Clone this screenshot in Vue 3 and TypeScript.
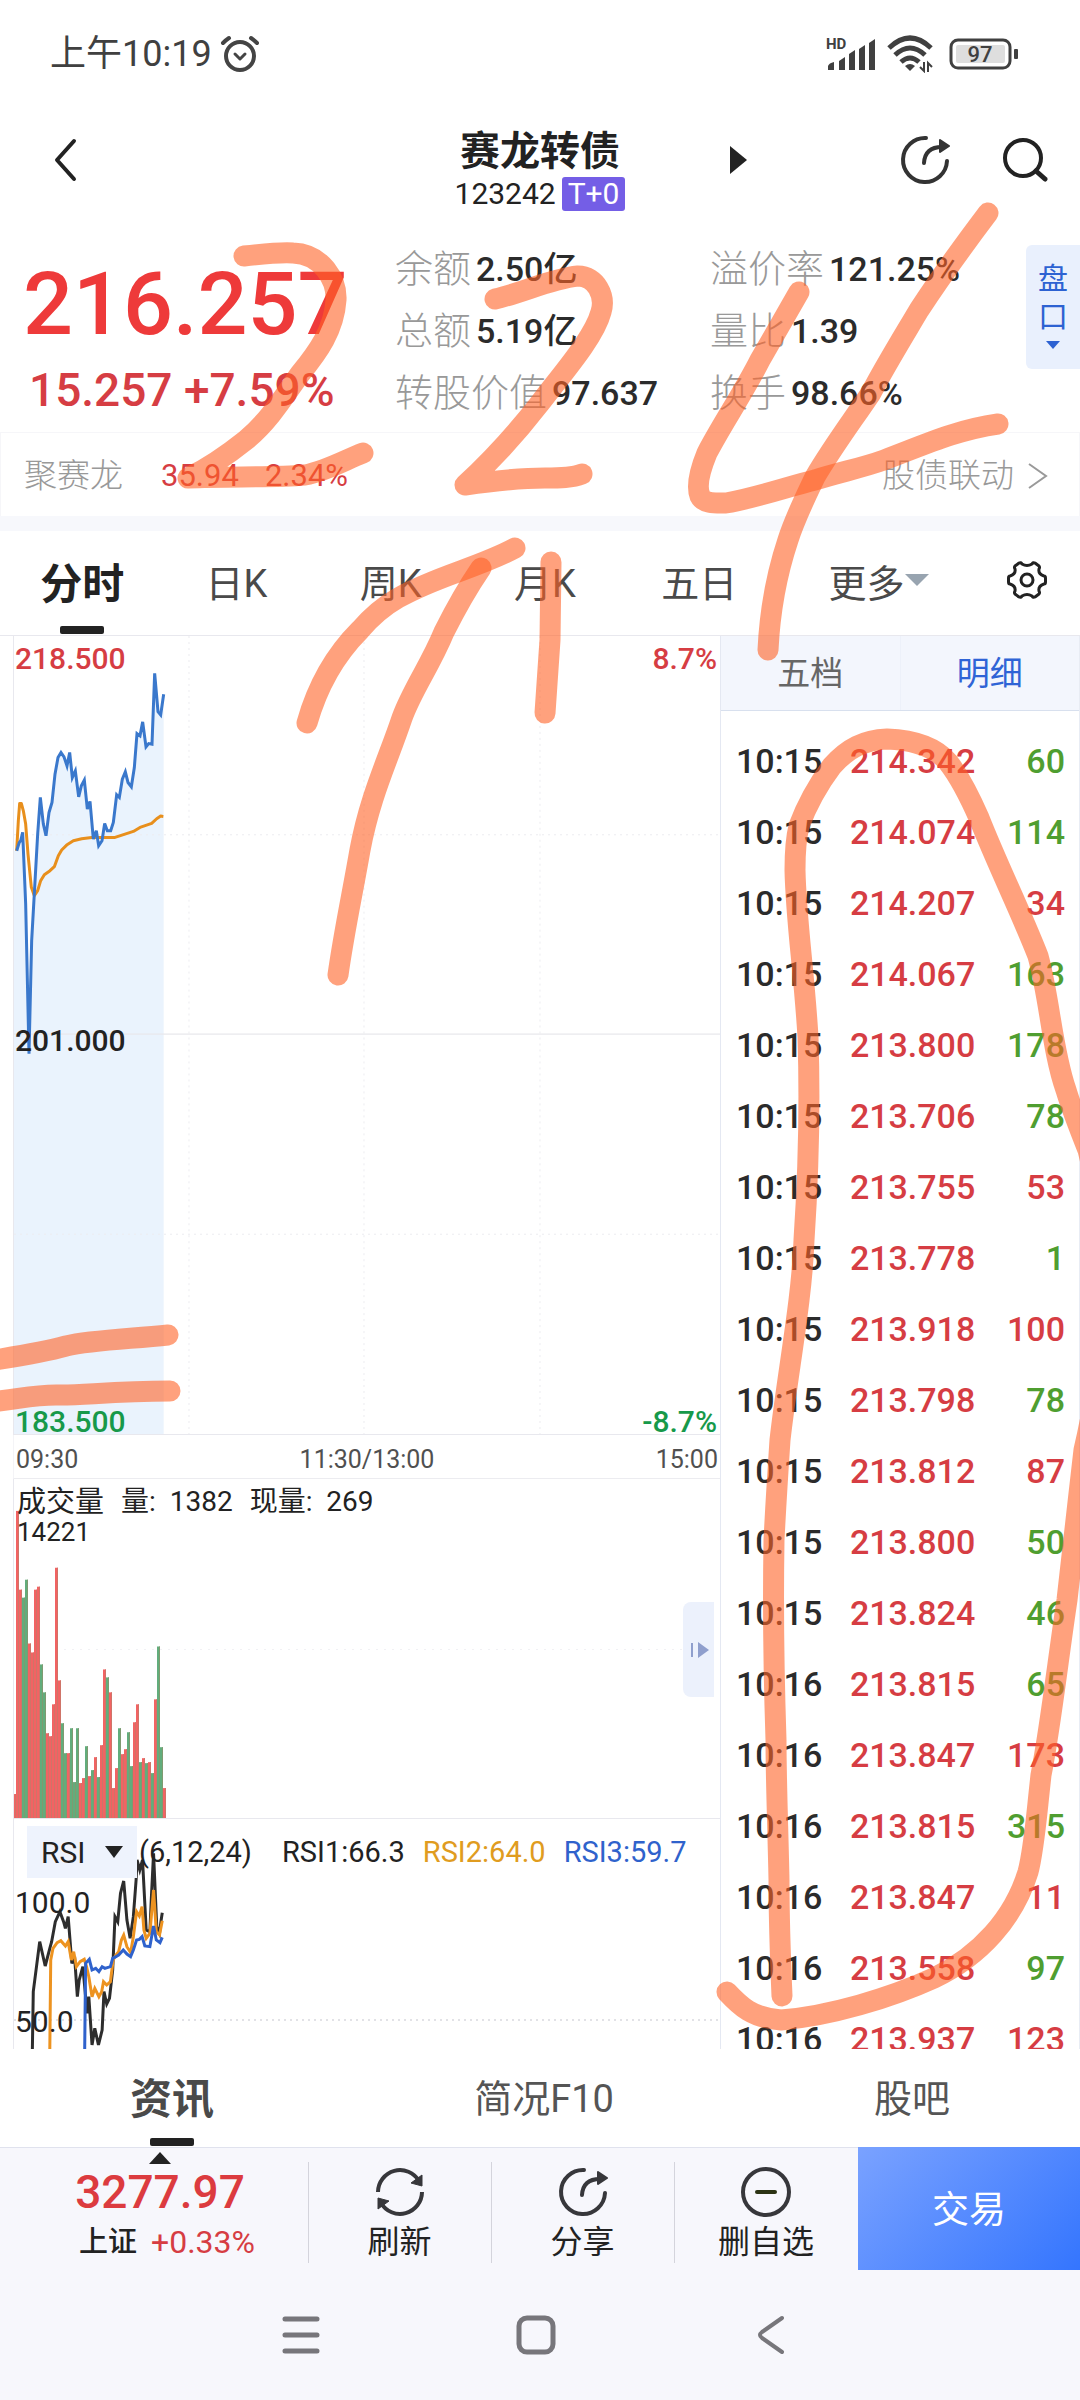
<script setup lang="ts">
import { ref } from 'vue'

type Tone = 'up' | 'down'
interface Tick { time: string; price: string; qty: number; tone: Tone }
interface Figure { label: string; value: string }

const figuresLeft: Figure[] = [
  { label: '余额', value: '2.50亿' },
  { label: '总额', value: '5.19亿' },
  { label: '转股价值', value: '97.637' },
]
const figuresRight: Figure[] = [
  { label: '溢价率', value: '121.25%' },
  { label: '量比', value: '1.39' },
  { label: '换手', value: '98.66%' },
]

const periods = ['分时', '日K', '周K', '月K', '五日']
const activePeriod = ref('分时')
const infoTabs = ['资讯', '简况F10', '股吧']
const activeInfo = ref('资讯')
const indicator = ref('RSI')

const rawTicks: [string, string, number, Tone][] = [
  ['10:15', '214.342', 60, 'down'],
  ['10:15', '214.074', 114, 'down'],
  ['10:15', '214.207', 34, 'up'],
  ['10:15', '214.067', 163, 'down'],
  ['10:15', '213.800', 178, 'down'],
  ['10:15', '213.706', 78, 'down'],
  ['10:15', '213.755', 53, 'up'],
  ['10:15', '213.778', 1, 'down'],
  ['10:15', '213.918', 100, 'up'],
  ['10:15', '213.798', 78, 'down'],
  ['10:15', '213.812', 87, 'up'],
  ['10:15', '213.800', 50, 'down'],
  ['10:15', '213.824', 46, 'down'],
  ['10:16', '213.815', 65, 'down'],
  ['10:16', '213.847', 173, 'up'],
  ['10:16', '213.815', 315, 'down'],
  ['10:16', '213.847', 11, 'up'],
  ['10:16', '213.558', 97, 'down'],
  ['10:16', '213.937', 123, 'up'],
]
const ticks: Tick[] = rawTicks.map(([time, price, qty, tone]) => ({ time, price, qty, tone }))

// Price panel, three units to the pixel.
const priceLine =
  '50,690 58,665 62,660 68,635 77,850 87,1300 95,960 104,800 113,640 121,530 130,610 138,645 147,575 156,545 165,460 174,410 183,395 192,408 201,435 209,395 217,470 226,450 236,528 244,495 253,478 262,565 270,542 280,655 289,630 296,675 306,660 314,608 322,630 332,630 340,605 350,522 358,530 367,475 376,453 384,485 394,498 403,440 411,338 420,345 428,303 438,378 446,368 456,370 464,157 474,272 482,282 491,220'
const priceArea = `42,690 ${priceLine} 491,2442 42,2442`
const averageLine =
  '50,690 55,600 59,548 64,548 70,570 77,610 84,700 94,800 103,825 113,810 122,780 133,762 150,750 163,738 175,705 185,688 200,673 220,660 245,654 275,650 345,650 375,640 400,632 420,620 455,608 470,594 482,586 490,587'

// One bar a minute: height and direction.
const volumes: [number, Tone][] = [
  [24, 'up'], [308, 'up'], [229, 'up'], [221, 'down'], [239, 'down'], [175, 'up'], [166, 'up'],
  [229, 'up'], [232, 'up'], [154, 'down'], [126, 'down'], [85, 'up'], [82, 'up'], [114, 'up'],
  [251, 'up'], [138, 'up'], [95, 'down'], [65, 'down'], [65, 'up'], [90, 'down'], [36, 'down'],
  [90, 'down'], [35, 'up'], [40, 'up'], [72, 'down'], [42, 'up'], [48, 'down'], [61, 'up'],
  [41, 'down'], [73, 'up'], [149, 'up'], [141, 'down'], [126, 'up'], [30, 'up'], [50, 'up'],
  [90, 'down'], [64, 'up'], [69, 'up'], [86, 'down'], [52, 'down'], [96, 'up'], [114, 'up'],
  [56, 'down'], [60, 'up'], [55, 'down'], [56, 'up'], [45, 'down'], [119, 'up'], [172, 'down'],
  [71, 'down'], [30, 'up'],
]

const rsi1 =
  '70,750 72,575 86,425 98,498 108,445 112,425 120,365 130,335 138,365 142,385 148,350 156,490 162,470 168,590 172,540 180,500 186,590 190,640 193,590 200,735 206,685 214,735 222,690 226,575 232,612 238,595 245,510 250,350 256,365 262,280 269,243 276,360 283,415 290,350 296,240 298,180 304,210 310,180 318,390 326,395 329,300 334,160 341,380 347,400 350,365 353,338'
const rsi2 =
  '108,750 110,480 115,445 124,428 132,422 142,438 148,425 155,480 160,455 166,500 174,485 183,478 188,500 193,530 200,590 206,565 215,590 221,575 225,545 232,555 240,545 246,480 252,465 258,455 264,420 269,405 276,440 284,458 290,410 297,335 303,348 309,320 313,390 318,415 326,400 334,270 340,395 347,405 353,362'
const rsi3 =
  '184,750 186,490 194,478 200,510 208,505 215,515 222,500 228,505 240,500 245,475 252,470 258,465 268,450 276,462 284,470 290,450 297,420 303,418 309,410 315,438 326,440 334,378 340,420 348,428 353,412'

// Freehand marker strokes laid over the screen.
const strokes = [
  'M244 256C262 254 280 252 293 253C322 254 337 280 336 300C334 330 318 352 300 374C284 396 270 420 246 440C226 456 208 468 188 478C230 476 270 478 305 475C326 471 345 460 363 453',
  'M495 299C525 292 550 279 578 276C596 276 606 296 601 312C594 338 562 374 540 403C516 434 490 462 465 485C500 480 520 478 545 478C560 478 572 478 582 474',
  'M799 292L760 360C744 392 722 424 707 453C700 470 696 486 700 496C704 504 716 503 726 503C756 498 790 486 815 480C840 472 862 468 884 460C924 445 956 430 998 424',
  'M988 213C960 250 940 278 919 310C900 342 884 368 871 393C850 424 832 448 815 477C804 500 795 518 788 540C776 576 770 608 768 650',
  'M307 723C318 684 336 654 360 630C372 616 384 606 398 598C436 576 478 568 515 548',
  'M481 568C466 590 456 608 444 632C430 666 412 690 402 718C388 760 370 796 360 850C352 896 344 932 338 975',
  'M551 562L550 640L545 713',
  'M-12 1361C20 1356 44 1352 66 1346C92 1340 130 1339 168 1335',
  'M-12 1402C16 1400 30 1395 56 1395C80 1396 110 1391 170 1391',
  'M782 1996C780 1950 779 1910 779 1880C778 1830 776 1780 776 1740C774 1680 773 1600 774 1540C776 1500 778 1470 780 1440C788 1370 802 1300 804 1240C808 1180 810 1100 808 1037C804 970 796 920 795 870C795 850 796 838 799 826C808 802 820 782 832 766C848 748 864 740 887 739C914 740 936 748 948 762C962 780 972 802 979 818C998 866 1020 910 1038 956C1050 1000 1052 1050 1066 1090C1072 1110 1080 1130 1088 1150C1108 1230 1108 1350 1084 1450C1078 1500 1072 1560 1067 1600C1058 1660 1050 1730 1041 1775C1036 1820 1034 1850 1028 1872C1014 1918 980 1956 934 1978C890 1998 830 2016 781 2020C752 2018 740 2006 727 1992',
]
</script>

<template>
  <div class="screen">
    <div class="status">
      <div class="status-side">
        <span>上午10:19</span>
        <svg class="alarm" viewBox="0 0 40 38" fill="none" stroke="#444" stroke-linecap="round">
          <circle cx="20" cy="21" r="14" stroke-width="4" />
          <path d="M15 19l5 5 5-5" stroke-width="3" stroke-linejoin="round" />
          <path d="M3 8q3-3 6-5M37 8q-3-3-6-5" stroke-width="4" />
        </svg>
      </div>
      <div class="status-side">
        <svg class="signal" viewBox="0 0 52 44" fill="#404040">
          <path d="M3 38v-4q1-3 6-4v8zM14 38v-9l6-4v13zM24 38V22l6-4v20zM34 38V17l6-4v25zM44 38V11l6-4v31z" />
          <text x="1" y="17" font-size="15" font-weight="700">HD</text>
        </svg>
        <svg class="wifi" viewBox="0 0 48 38" fill="none" stroke="#404040" stroke-width="5">
          <path d="M2 13q21-20 42 0M8 20q15-14 30 0M14 27q9-8 18 0" />
          <path d="M18 31q5-4 10 0l-5 5z" fill="#404040" stroke="none" />
          <path d="M37 27v9l-4-4M41 37v-9l4 4" stroke-width="2" />
        </svg>
        <svg class="battery" viewBox="0 0 70 32">
          <rect x="2" y="2" width="59" height="28" rx="7" fill="none" stroke="#404040" stroke-width="3" />
          <rect x="7" y="7" width="49" height="18" rx="2" fill="#dedede" />
          <rect x="65" y="11" width="4" height="10" rx="1" fill="#404040" />
          <text x="31" y="24" font-size="22" font-weight="500" text-anchor="middle" fill="#404040">97</text>
        </svg>
      </div>
    </div>

    <header class="header">
      <button class="icon-btn" aria-label="返回">
        <svg width="24" height="44" viewBox="0 0 24 44" fill="none" stroke="#222" stroke-width="4" stroke-linecap="round" stroke-linejoin="round"><path d="M20 3L3 22l17 19" /></svg>
      </button>
      <div class="title">
        <h1>赛龙转债</h1>
        <div class="code"><span>123242</span><span class="badge">T+0</span></div>
      </div>
      <div class="actions">
        <button class="icon-btn next" aria-label="下一个">
          <svg width="17" height="28" viewBox="0 0 17 28"><path d="M0 0l17 14L0 28z" fill="#222" /></svg>
        </button>
        <button class="icon-btn" aria-label="分享">
          <svg width="50" height="50" viewBox="0 0 50 50" fill="none" stroke="#333" stroke-width="4" stroke-linecap="round"><path d="M26 3A22 22 0 1 0 47 26" /><path d="M24 28Q25 12 42 12" /><path d="M40 5l9 6-9 6z" fill="#333" stroke-width="2" stroke-linejoin="round" /></svg>
        </button>
        <button class="icon-btn" aria-label="搜索">
          <svg width="46" height="46" viewBox="0 0 46 46" fill="none" stroke="#222" stroke-width="4" stroke-linecap="round"><circle cx="21" cy="21" r="18" /><path d="M34 34l9 8" stroke-width="5" /></svg>
        </button>
      </div>
    </header>

    <section class="quote">
      <div class="last">
        <strong>216.257</strong>
        <p>15.257 +7.59%</p>
      </div>
      <dl class="figures">
        <div v-for="f in figuresLeft" :key="f.label"><dt>{{ f.label }}</dt><dd>{{ f.value }}</dd></div>
      </dl>
      <dl class="figures">
        <div v-for="f in figuresRight" :key="f.label"><dt>{{ f.label }}</dt><dd>{{ f.value }}</dd></div>
      </dl>
      <button class="depth">
        <span>盘</span><span>口</span>
        <svg width="14" height="8" viewBox="0 0 14 8"><path d="M0 0h14L7 8z" fill="#2d62d2" /></svg>
      </button>
    </section>

    <a class="linked" href="#stock">
      <span>聚赛龙</span>
      <span class="up linked-price">35.94</span>
      <span class="up linked-change">2.34%</span>
      <span class="linked-more">股债联动</span>
      <svg width="20" height="28" viewBox="0 0 20 28" fill="none" stroke="#999" stroke-width="2"><path d="M1 2l17 12L1 26" /></svg>
    </a>

    <nav class="periods">
      <button v-for="p in periods" :key="p" :class="{ on: p === activePeriod }" @click="activePeriod = p">{{ p }}</button>
      <button class="more">更多<svg width="24" height="12" viewBox="0 0 24 12"><path d="M0 0h24L12 12z" fill="#98a4b0" /></svg></button>
      <button class="gear" aria-label="设置">
        <svg width="40" height="40" viewBox="0 0 40 40" fill="none" stroke="#222" stroke-width="3" stroke-linejoin="round">
          <path d="M12 3Q14 2 15 4Q20 7 25 4Q26 2 28 3L32 6Q33 7 32 9Q31 14 37 16Q38.500 16 38.500 18V22Q38.500 24 37 24Q31 26 32 31Q33 33 32 34L28 37Q26 38 25 36Q20 33 15 36Q14 38 12 37L8 34Q7 33 8 31Q9 26 3 24Q1.500 24 1.500 22V18Q1.500 16 3 16Q9 14 8 9Q7 7 8 6Z" />
          <circle cx="20" cy="20" r="6" />
        </svg>
      </button>
    </nav>

    <main class="board">
      <div class="charts">
        <div class="panel price">
          <svg viewBox="42 45 2118 2397" preserveAspectRatio="none">
            <polygon :points="priceArea" fill="#eaf3fd" />
            <path d="M42 642H2160M42 1842H2160M567 45V2442M1092 45V2442M1620 45V2442" fill="none" stroke="#ececf0" stroke-width="3" stroke-dasharray="6 12" />
            <path d="M42 1241H2160" stroke="#e8e8ec" stroke-width="4" />
            <polyline :points="averageLine" fill="none" stroke="#e88f1c" stroke-width="9" stroke-linejoin="round" />
            <polyline :points="priceLine" fill="none" stroke="#3a78cc" stroke-width="9" />
          </svg>
          <span class="tag top left up">218.500</span>
          <span class="tag top right up">8.7%</span>
          <span class="tag mid left">201.000</span>
          <span class="tag bottom left down">183.500</span>
          <span class="tag bottom right down">-8.7%</span>
        </div>
        <div class="times"><span>09:30</span><span>11:30/13:00</span><span>15:00</span></div>
        <div class="panel volume">
          <svg viewBox="0 0 706 340" preserveAspectRatio="none">
            <path d="M50 171H706" stroke="#f1f1f4" stroke-dasharray="2 6" />
            <g v-for="(v, i) in volumes" :key="i">
              <rect :x="i * 3 - 1" :y="340 - v[0]" width="3" :height="v[0]" :fill="v[1] === 'up' ? '#f26363' : '#62ad7c'" />
              <rect :x="i * 3 + 1" :y="340 - v[0]" width="1" :height="v[0]" :fill="v[1] === 'up' ? '#cf7468' : '#7f9a70'" />
            </g>
          </svg>
          <div class="volume-head"><span>成交量</span><span>量:&nbsp; 1382</span><span>现量:&nbsp; 269</span></div>
          <span class="volume-max">14221</span>
          <button class="fold" aria-label="收起">
            <svg width="18" height="16" viewBox="0 0 18 16" fill="#8f9fcd"><path d="M0 1h2v14H0zM7 0l11 8-11 8z" /></svg>
          </button>
        </div>
        <div class="panel rsi">
          <svg viewBox="30 57 1538 690" preserveAspectRatio="none" fill="none" stroke-width="3">
            <path d="M30 660H1568" stroke="#e2e2e6" stroke-width="2" stroke-dasharray="2 4" vector-effect="non-scaling-stroke" />
            <polyline :points="rsi1" stroke="#2d2d2d" vector-effect="non-scaling-stroke" />
            <polyline :points="rsi2" stroke="#ed9320" vector-effect="non-scaling-stroke" />
            <polyline :points="rsi3" stroke="#2f62cc" vector-effect="non-scaling-stroke" />
          </svg>
          <div class="rsi-head">
            <label class="pick">
              <select v-model="indicator" aria-label="指标"><option>RSI</option><option>MACD</option><option>KDJ</option></select>
              <svg width="18" height="12" viewBox="0 0 18 12"><path d="M0 0h18L9 12z" fill="#222" /></svg>
            </label>
            <span class="params">(6,12,24)</span>
            <span>RSI1:66.3</span>
            <span class="r2">RSI2:64.0</span>
            <span class="r3">RSI3:59.7</span>
          </div>
          <span class="scale hundred">100.0</span>
          <span class="scale fifty">50.0</span>
        </div>
      </div>

      <aside class="side">
        <div class="side-tabs"><button>五档</button><button class="on">明细</button></div>
        <div class="tick-list">
          <table>
            <tbody>
              <tr v-for="(t, i) in ticks" :key="i">
                <td>{{ t.time }}</td>
                <td class="up">{{ t.price }}</td>
                <td :class="t.tone === 'up' ? 'up' : 'sell'">{{ t.qty }}</td>
              </tr>
            </tbody>
          </table>
        </div>
      </aside>
    </main>

    <nav class="info-tabs">
      <button v-for="t in infoTabs" :key="t" :class="{ on: t === activeInfo }" @click="activeInfo = t">{{ t }}</button>
    </nav>

    <footer class="toolbar">
      <a class="index" href="#index">
        <svg width="22" height="12" viewBox="0 0 22 12"><path d="M0 12L11 0l11 12z" fill="#222" /></svg>
        <strong>3277.97</strong>
        <span class="index-row"><b>上证</b><span class="up">+0.33%</span></span>
      </a>
      <button class="tool">
        <svg width="50" height="50" viewBox="0 0 50 50" fill="none" stroke="#37373b" stroke-width="4"><path d="M3 25A22 22 0 0 1 44 14M47 25A22 22 0 0 1 6 36" /><path d="M47 8v11l-11-3zM3 42V31l11 3z" fill="#37373b" stroke-width="1" /></svg>
        <span>刷新</span>
      </button>
      <button class="tool">
        <svg width="50" height="50" viewBox="0 0 50 50" fill="none" stroke="#37373b" stroke-width="4" stroke-linecap="round"><path d="M26 3A22 22 0 1 0 47 26" /><path d="M24 28Q25 12 42 12" /><path d="M40 5l9 6-9 6z" fill="#37373b" stroke-width="2" stroke-linejoin="round" /></svg>
        <span>分享</span>
      </button>
      <button class="tool">
        <svg width="50" height="50" viewBox="0 0 50 50" fill="none" stroke="#37373b" stroke-width="4" stroke-linecap="round"><circle cx="25" cy="25" r="23" /><path d="M16 25h18" stroke="#2c3314" /></svg>
        <span>删自选</span>
      </button>
      <button class="trade">交易</button>
    </footer>

    <nav class="system">
      <button class="icon-btn" aria-label="最近任务">
        <svg width="40" height="40" viewBox="0 0 40 40" stroke="#77767b" stroke-width="5" stroke-linecap="round"><path d="M4 4h32M4 20h32M4 36h32" /></svg>
      </button>
      <button class="icon-btn" aria-label="主页">
        <svg width="40" height="40" viewBox="0 0 40 40" fill="none" stroke="#77767b" stroke-width="5"><rect x="3" y="3" width="34" height="34" rx="8" /></svg>
      </button>
      <button class="icon-btn" aria-label="返回">
        <svg width="40" height="40" viewBox="0 0 40 40" fill="none" stroke="#77767b" stroke-width="4" stroke-linecap="round" stroke-linejoin="round"><path d="M31 3L11 17Q7 20 11 23L31 37" /></svg>
      </button>
    </nav>

    <svg class="marker" viewBox="0 0 1080 2400" preserveAspectRatio="none" aria-hidden="true">
      <path v-for="(d, i) in strokes" :key="i" :d="d" />
    </svg>
  </div>
</template>

<style>
body { background: #fff; }
</style>

<style scoped>
* { box-sizing: border-box; }
.screen {
  position: relative;
  overflow: hidden;
  background: #fff;
  color: #222;
  font-family: Roboto, "Noto Sans CJK SC", sans-serif;
}
svg { display: block; flex: none; }
button { border: 0; padding: 0; margin: 0; background: none; font: inherit; color: inherit; }
a { color: inherit; text-decoration: none; }
h1, p, dl, dd { margin: 0; }
.up { color: #d63d43; }
.down { color: #17994a; }
.sell { color: #4f9e30; }

.status {
  display: flex;
  justify-content: space-between;
  align-items: center;
  height: 108px;
  padding: 0 61px 0 50px;
  color: #404040;
  font-size: 36px;
  line-height: 40px;
}
.status-side { display: flex; align-items: center; gap: 8px; }
.alarm { width: 40px; height: 38px; }
.signal { width: 52px; height: 44px; }
.wifi { width: 48px; height: 38px; margin-left: 2px; }
.battery { width: 70px; height: 32px; margin-left: 6px; }

.header {
  display: grid;
  grid-template-columns: 1fr auto 1fr;
  align-items: center;
  height: 116px;
  padding: 0 32px 12px 54px;
}
.icon-btn { display: flex; align-items: center; justify-content: center; justify-self: start; }
.title { display: flex; flex-direction: column; align-items: center; margin-left: -22px; padding-top: 18px; }
.title h1 { font-size: 40px; line-height: 50px; font-weight: 700; }
.code { display: flex; align-items: center; gap: 6px; font-size: 30px; line-height: 34px; }
.badge { background: #745ee6; color: #fff; border-radius: 3px; padding: 0 6px; }
.actions { display: flex; align-items: center; justify-content: flex-end; gap: 52px; }
.next { margin-right: 101px; }

.quote { display: grid; grid-template-columns: 395fr 315fr 316fr 54fr; height: 208px; }
.last { padding: 25px 0 0 23px; }
.last strong { display: block; font-size: 88px; line-height: 110px; font-weight: 500; color: #ee3a3a; }
.last p { font-size: 46px; line-height: 62px; font-weight: 500; color: #d63d43; padding-left: 6px; }
.figures { padding-top: 14px; white-space: nowrap; }
.figures div { display: flex; align-items: center; gap: 5px; height: 62px; font-size: 38px; line-height: 62px; }
.figures dt { color: #999; font-weight: 300; }
.figures dd { font-size: 34px; font-weight: 500; color: #2b2b2b; }
.depth {
  display: flex; flex-direction: column; align-items: center;
  align-self: start;
  height: 124px; margin-top: 21px; padding-top: 15px;
  background: #e9f0fd; color: #2d62d2; border-radius: 6px 0 0 6px;
  font-size: 30px; line-height: 38px;
}
.depth svg { margin-top: 5px; }

.linked {
  display: flex; align-items: center;
  height: 84px; padding: 2px 31px 0 23px;
  border: 1px solid #f6f6f9; border-bottom: 0;
  color: #999; font-size: 33px; line-height: 40px; font-weight: 300;
}
.linked .up { font-size: 31px; font-weight: 400; }
.linked-price { margin-left: 38px; }
.linked-change { margin-left: 26px; }
.linked-more { margin-left: auto; margin-right: 14px; }

.periods {
  display: grid; grid-template-columns: repeat(5, 154fr) 204fr 92fr;
  height: 119px; padding: 0 7px 0 5px;
  border-top: 15px solid #f7f8fc;
  color: #4a4a4a; font-size: 38px;
}
.periods button, .info-tabs button { position: relative; padding-bottom: 6px; }
.periods .on { font-size: 42px; font-weight: 700; color: #222; }
.periods .on::after, .info-tabs .on::after {
  content: ""; position: absolute; left: 50%; bottom: 1px;
  width: 44px; height: 8px; margin-left: -22px; background: #222; border-radius: 2px;
}
.periods .more, .periods .gear { display: flex; align-items: center; justify-content: center; }

.board { display: grid; grid-template-columns: 2fr 1fr; border-top: 1px solid #e8e8ee; }
.charts { min-width: 0; padding-left: 13px; }
.panel { position: relative; border-left: 1px solid #e8e8ee; border-bottom: 1px solid #e8e8ee; }
.panel > svg { width: 100%; height: 100%; }
.price { height: 799px; }
.tag { position: absolute; font-size: 30px; line-height: 30px; font-weight: 500; }
.tag.left { left: 1px; }
.tag.right { right: 3px; }
.tag.top { top: 8px; }
.tag.mid { top: 50%; margin-top: -9px; }
.tag.bottom { bottom: -3px; }
.times {
  display: flex; justify-content: space-between;
  height: 44px; padding: 0 2px; line-height: 50px; font-size: 25px; color: #505050;
  border-left: 1px solid #f4f4f7; border-bottom: 1px solid #ececf0;
}
.volume { height: 340px; }
.volume-head { position: absolute; left: 3px; top: 5px; display: flex; gap: 17px; font-size: 29px; line-height: 36px; }
.volume-head span + span { font-size: 28px; }
.volume-max { position: absolute; left: 3px; top: 38px; font-size: 26px; line-height: 30px; }
.fold {
  position: absolute; right: 6px; top: 123px; width: 31px; height: 95px; padding-left: 8px;
  background: #ecf1fc; border-radius: 8px 0 0 8px;
}
.rsi { height: 230px; border-bottom: 0; }
.rsi-head { position: absolute; left: 13px; top: 6px; display: flex; align-items: center; font-size: 29px; line-height: 54px; white-space: nowrap; gap: 18px; }
.pick { display: flex; align-items: center; position: relative; width: 110px; height: 52px; background: #eef3fd; }
.pick select { width: 100%; height: 100%; padding: 0 0 0 14px; border: 0; background: none; appearance: none; font: inherit; font-size: 30px; color: #222; }
.pick svg { position: absolute; right: 14px; top: 20px; }
.params { margin: 0 12px 0 -16px; }
.r2 { color: #e09c20; }
.r3 { color: #2f62cc; }
.scale { position: absolute; left: 1px; font-size: 30px; line-height: 30px; }
.hundred { top: 69px; }
.fifty { bottom: 12px; }

.side { display: flex; flex-direction: column; min-width: 0; border-left: 1px solid #e4e8f2; border-right: 1px solid #e8ecf4; }
.side-tabs { display: flex; height: 75px; background: #f3f6fd; border-bottom: 1px solid #d8e0ee; font-size: 33px; color: #666; }
.side-tabs button { flex: 1; padding-bottom: 4px; }
.side-tabs button + button { border-left: 1px solid #edf1fa; }
.side-tabs .on { color: #2f64d6; }
.tick-list { flex: 1 1 0; height: 0; overflow: hidden; padding-top: 14px; }
table { width: 100%; border-collapse: collapse; table-layout: fixed; font-size: 34px; font-weight: 500; }
td { height: 71px; padding: 0; color: #2b2b2b; }
td:nth-child(1) { width: 36%; padding-left: 15px; }
td:nth-child(3) { width: 28%; padding-right: 14px; text-align: right; }
td.up { color: #d63d43; }
td.sell { color: #4f9e30; }

.info-tabs { display: flex; justify-content: space-around; height: 98px; font-size: 38px; color: #555; }
.info-tabs .on { font-size: 42px; font-weight: 700; color: #4a4a4a; }

.toolbar {
  display: grid; grid-template-columns: 308fr 183fr 183fr 184fr 222fr;
  height: 123px; background: #f7f7fc; border-top: 1px solid #e0e2ee;
}
.index { display: flex; flex-direction: column; align-items: center; padding: 4px 0 0 12px; }
.index strong { font-size: 46px; line-height: 56px; font-weight: 500; color: #dc3b3f; }
.index-row { display: flex; align-items: center; gap: 14px; font-size: 32px; line-height: 44px; padding-left: 14px; }
.index-row b { font-size: 29px; font-weight: 500; }
.tool { position: relative; display: flex; flex-direction: column; align-items: center; padding-top: 19px; font-size: 32px; line-height: 50px; }
.tool::before { content: ""; position: absolute; left: 0; top: 14px; bottom: 7px; width: 1px; background: #d4d4dc; }
.trade { margin-top: -1px; padding-bottom: 4px; background: linear-gradient(135deg, #7aa2ff, #3475fe); color: #fff; font-size: 37px; }

.system { display: flex; justify-content: center; gap: 195px; height: 130px; padding-bottom: 1px; padding-right: 8px; background: #f7f7fc; }

.marker { position: absolute; inset: 0; width: 100%; height: 100%; pointer-events: none; }
.marker path { fill: none; stroke: #ff6226; stroke-opacity: 0.6; stroke-width: 21px; stroke-linecap: round; stroke-linejoin: round; }
</style>
